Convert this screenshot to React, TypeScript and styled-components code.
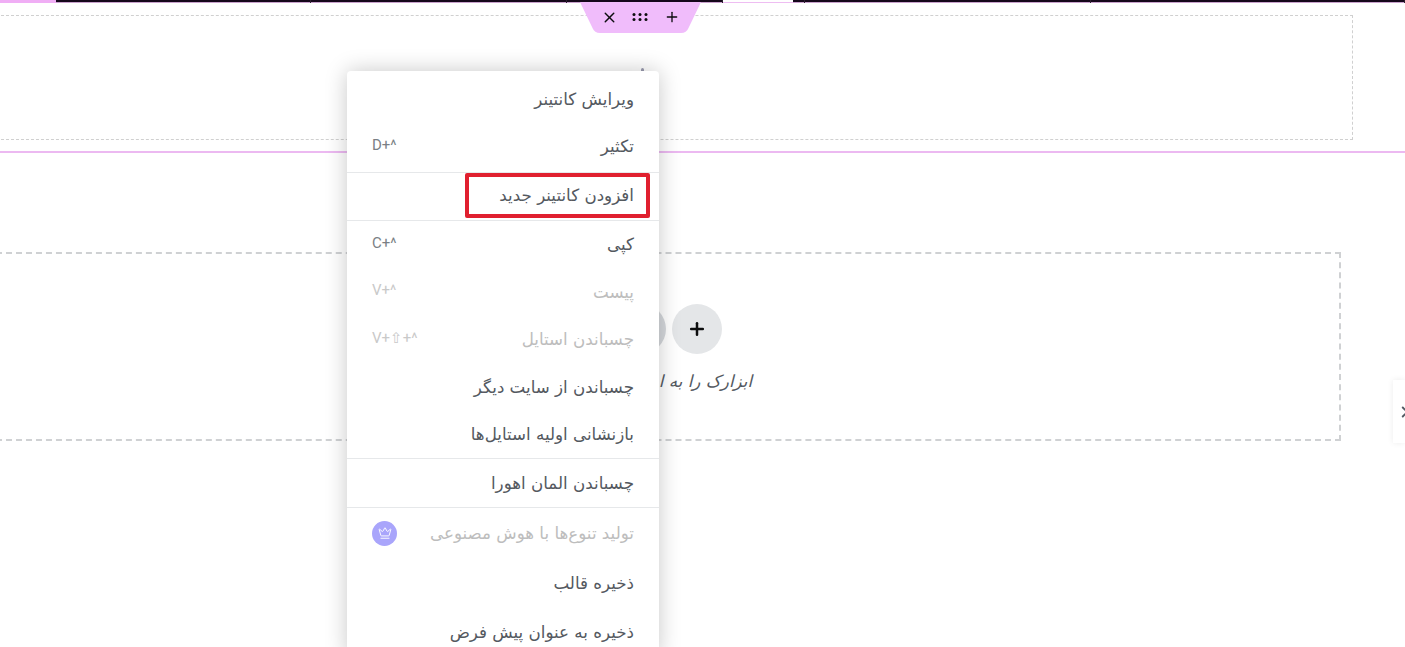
import { Crown, Plus, X, ChevronRight } from "lucide-react";
import styled, { createGlobalStyle } from "styled-components";

const STRIP_PARTS = [
    { width: 56, kind: "pink" },
    { width: 255, kind: "dark" },
    { width: 256, kind: "dark" },
    { width: 156, kind: "dark" },
    { width: 70, kind: "light" },
    { width: 12, kind: "dark" },
    { width: 286, kind: "dark" },
    { width: 314, kind: "dark" },
];

type MenuEntry = { label: string; shortcut?: string; disabled?: boolean; premium?: boolean };

const MENU_GROUPS: { entries: MenuEntry[]; roomy?: boolean; marked?: boolean }[] = [
    {
        entries: [
            { label: "ویرایش کانتینر" },
            { label: "تکثیر", shortcut: "D+^" },
        ],
    },
    { entries: [{ label: "افزودن کانتینر جدید" }], marked: true },
    {
        entries: [
            { label: "کپی", shortcut: "C+^" },
            { label: "پیست", shortcut: "V+^", disabled: true },
            { label: "چسباندن استایل", shortcut: "V+⇧+^", disabled: true },
            { label: "چسباندن از سایت دیگر" },
            { label: "بازنشانی اولیه استایل‌ها" },
        ],
    },
    { entries: [{ label: "چسباندن المان اهورا" }] },
    {
        roomy: true,
        entries: [
            { label: "تولید تنوع‌ها با هوش مصنوعی", disabled: true, premium: true },
            { label: "ذخیره قالب" },
            { label: "ذخیره به عنوان پیش فرض" },
        ],
    },
];

export default function App() {
    return (
        <Page>
            <GlobalStyle />
            <TopStrip>
                {STRIP_PARTS.map((part, index) => (
                    <StripPart key={index} $width={part.width} $kind={part.kind} />
                ))}
            </TopStrip>

            <SelectedSection>
                <InnerBox>
                    <Caret />
                </InnerBox>
            </SelectedSection>

            <EmptySection>
                <DropZone>
                    <DropButtons>
                        <DropButton>
                            <Plus size={20} strokeWidth={3} color="#0c0d0e" />
                        </DropButton>
                        <DropButton $muted />
                    </DropButtons>
                    <DropHint>ابزارک را به اینجا بکشید</DropHint>
                </DropZone>
            </EmptySection>

            <SectionHandle>
                <HandleShape viewBox="0 0 121 31" aria-hidden="true">
                    <path d="M0 0H121L108.5 26Q106.5 31 101 31H20Q14.5 31 12.5 26Z" fill="#f0bcfb" />
                </HandleShape>
                <HandleIcons>
                    <X size={17} strokeWidth={2} color="#0c0d0e" />
                    <svg width="18" height="8" viewBox="0 0 18 8" aria-hidden="true">
                        {[2, 8, 14].map((x) =>
                            [1.5, 6.5].map((y) => <circle key={x + "-" + y} cx={x} cy={y} r="1.5" fill="#0c0d0e" />),
                        )}
                    </svg>
                    <Plus size={16} strokeWidth={2} color="#0c0d0e" />
                </HandleIcons>
            </SectionHandle>

            <ContextMenu>
                {MENU_GROUPS.map((group, groupIndex) => (
                    <MenuGroup key={groupIndex} $first={groupIndex === 0} $roomy={group.roomy}>
                        {group.entries.map((entry) => (
                            <MenuItem
                                key={entry.label}
                                $disabled={entry.disabled}
                                $roomy={group.roomy}
                                $marked={group.marked}
                            >
                                <MenuLabel>{entry.label}</MenuLabel>
                                {entry.shortcut && <Shortcut $disabled={entry.disabled}>{entry.shortcut}</Shortcut>}
                                {entry.premium && (
                                    <PremiumBadge>
                                        <Crown size={14} strokeWidth={1.6} color="#fff" />
                                    </PremiumBadge>
                                )}
                            </MenuItem>
                        ))}
                        {group.marked && <Highlight />}
                    </MenuGroup>
                ))}
            </ContextMenu>

            <PanelToggle>
                <ChevronRight size={18} strokeWidth={2.5} color="#515962" />
            </PanelToggle>
        </Page>
    );
}

const GlobalStyle = createGlobalStyle`
    html, body {
        margin: 0;
        padding: 0;
        background: #fff;
    }
    * {
        box-sizing: border-box;
    }
`;

const Page = styled.div`
    position: relative;
    height: 647px;
    overflow: hidden;
    background: #fff;
    font-family: "DejaVu Sans", "Noto Sans", sans-serif;
`;

const TopStrip = styled.div`
    display: flex;
    height: 3px;
`;

const StripPart = styled.div<{ $width: number; $kind: string }>`
    flex: 0 0 ${(p) => p.$width}px;
    border-right: 1px solid ${(p) => (p.$kind === "dark" ? "#2c2030" : "transparent")};
    background: ${(p) =>
        p.$kind === "pink"
            ? "#f0aef5"
            : p.$kind === "light"
              ? "linear-gradient(#fff 2px, #eebdf2 2px)"
              : "linear-gradient(#15071b 2px, #c9a2cd 2px)"};
`;

const SelectedSection = styled.section`
    height: 150px;
    padding: 12px 52px 11px 0;
    border-bottom: 2px solid #ecb9f1;
`;

const InnerBox = styled.div`
    position: relative;
    height: 125px;
    margin-left: -4px;
    border: 1px dashed #d0d0d0;
`;

const Caret = styled.span`
    position: absolute;
    top: 52px;
    left: 644px;
    width: 3px;
    height: 6px;
    border-radius: 2px;
    background: #9a9bb0;
`;

const EmptySection = styled.section`
    padding: 99px 64px 0 0;
`;

const DropZone = styled.div`
    height: 189px;
    margin-left: -4px;
    display: flex;
    flex-direction: column;
    align-items: center;
    padding-top: 50px;
    border: 2px dashed #cfd1d3;
`;

const DropButtons = styled.div`
    display: flex;
    gap: 6px;
    direction: ltr;
    flex-direction: row-reverse;
`;

const DropButton = styled.div<{ $muted?: boolean }>`
    width: 50px;
    height: 50px;
    border-radius: 50%;
    display: flex;
    align-items: center;
    justify-content: center;
    background: ${(p) => (p.$muted ? "#d5d8dc" : "#e4e6e8")};
`;

const DropHint = styled.div`
    margin-top: 15px;
    direction: rtl;
    font-size: 16.8px;
    line-height: 24px;
    font-style: italic;
    color: #54595f;
`;

const SectionHandle = styled.div`
    position: absolute;
    top: 2px;
    left: 580px;
    width: 121px;
    height: 31px;
`;

const HandleShape = styled.svg`
    display: block;
    width: 121px;
    height: 31px;
`;

const HandleIcons = styled.div`
    position: absolute;
    top: 6px;
    left: 21px;
    width: 79px;
    height: 18px;
    display: flex;
    align-items: center;
    justify-content: space-between;
`;

const ContextMenu = styled.div`
    position: absolute;
    top: 71px;
    left: 347px;
    width: 312px;
    direction: rtl;
    background: #fff;
    border-radius: 4px;
    box-shadow: 0 0 22px rgba(0, 0, 0, 0.22);
`;

const MenuGroup = styled.div<{ $first?: boolean; $roomy?: boolean }>`
    position: relative;
    padding-top: ${(p) => (p.$first ? "4px" : p.$roomy ? "1px" : "0")};
    padding-bottom: ${(p) => (p.$first ? "2px" : "0")};
    border-bottom: 1px solid #e6e8ea;

    &:last-child {
        border-bottom: none;
    }
`;

const MenuItem = styled.div<{ $disabled?: boolean; $roomy?: boolean; $marked?: boolean }>`
    height: ${(p) => (p.$roomy ? "49.5px" : p.$marked ? "46.5px" : "47.5px")};
    padding: 0 25px ${(p) => (p.$marked ? "2px" : "0")};
    display: flex;
    align-items: center;
    justify-content: space-between;
    font-size: 16.7px;
    color: ${(p) => (p.$disabled ? "#bdbdbd" : "#54595f")};
`;

const MenuLabel = styled.span`
    line-height: 24px;
`;

const Shortcut = styled.span<{ $disabled?: boolean }>`
    direction: ltr;
    font-family: Roboto, "DejaVu Sans", sans-serif;
    font-size: 15px;
    margin-top: -3px;
    color: ${(p) => (p.$disabled ? "#c9c9c9" : "#7a7f85")};
`;

const PremiumBadge = styled.span`
    width: 25px;
    height: 25px;
    border-radius: 50%;
    display: flex;
    align-items: center;
    justify-content: center;
    background: #a9a5fb;
`;

const Highlight = styled.div`
    position: absolute;
    top: 0;
    left: 118px;
    width: 185px;
    height: 45px;
    border: 4px solid #e0202f;
    border-radius: 2px;
`;

const PanelToggle = styled.div`
    position: absolute;
    top: 380px;
    left: 1393px;
    width: 12px;
    height: 63px;
    display: flex;
    align-items: center;
    padding-left: 3px;
    overflow: hidden;
    background: #fff;
    box-shadow: 0 0 6px rgba(0, 0, 0, 0.08);

    svg {
        flex: none;
    }
`;
